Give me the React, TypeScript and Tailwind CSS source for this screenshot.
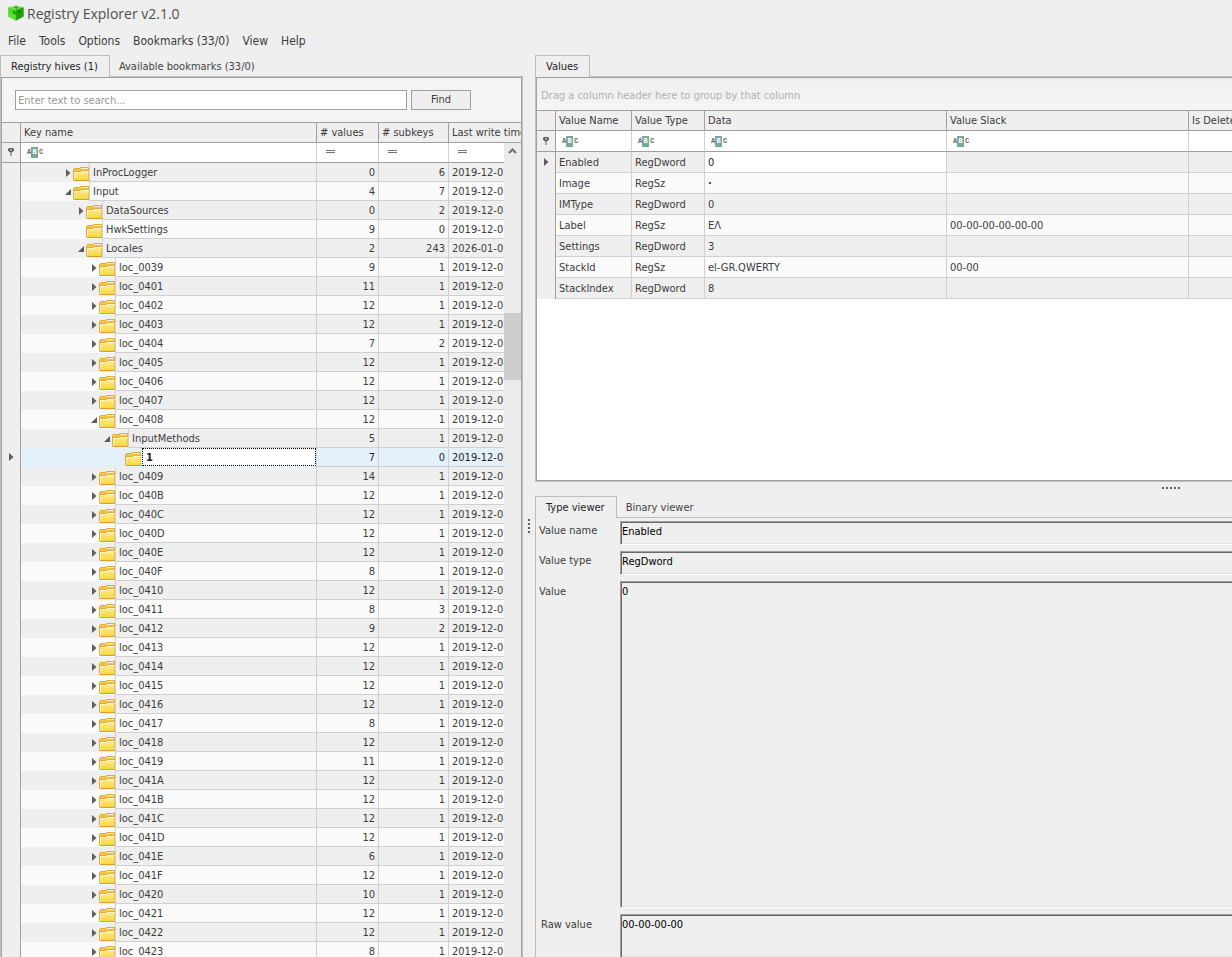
import { useState } from "react";
import type { ReactNode } from "react";

// Define types
type TreeRow = {
  name: string;
  depth: number;
  state: "open" | "closed" | "leaf";
  values: number;
  subkeys: number;
  lastWrite: string;
};

type RegValue = {
  name: string;
  type: string;
  data: string;
  slack: string;
};

const DATE = "2019-12-07 09:17:27";

const row = (
  name: string,
  depth: number,
  state: TreeRow["state"],
  values: number,
  subkeys: number,
  lastWrite = DATE
): TreeRow => ({ name, depth, state, values, subkeys, lastWrite });

const locale = (code: string, values: number, subkeys = 1) =>
  row(`loc_${code}`, 2, "closed", values, subkeys);

const treeRows: TreeRow[] = [
  row("InProcLogger", 0, "closed", 0, 6),
  row("Input", 0, "open", 4, 7),
  row("DataSources", 1, "closed", 0, 2),
  row("HwkSettings", 1, "leaf", 9, 0),
  row("Locales", 1, "open", 2, 243, "2026-01-02 09:17:27"),
  locale("0039", 9),
  locale("0401", 11),
  locale("0402", 12),
  locale("0403", 12),
  locale("0404", 7, 2),
  locale("0405", 12),
  locale("0406", 12),
  locale("0407", 12),
  row("loc_0408", 2, "open", 12, 1),
  row("InputMethods", 3, "open", 5, 1),
  row("1", 4, "leaf", 7, 0),
  locale("0409", 14),
  locale("040B", 12),
  locale("040C", 12),
  locale("040D", 12),
  locale("040E", 12),
  locale("040F", 8),
  locale("0410", 12),
  locale("0411", 8, 3),
  locale("0412", 9, 2),
  locale("0413", 12),
  locale("0414", 12),
  locale("0415", 12),
  locale("0416", 12),
  locale("0417", 8),
  locale("0418", 12),
  locale("0419", 11),
  locale("041A", 12),
  locale("041B", 12),
  locale("041C", 12),
  locale("041D", 12),
  locale("041E", 6),
  locale("041F", 12),
  locale("0420", 10),
  locale("0421", 12),
  locale("0422", 12),
  locale("0423", 8),
];

const regValues: RegValue[] = [
  { name: "Enabled", type: "RegDword", data: "0", slack: "" },
  { name: "Image", type: "RegSz", data: "·", slack: "" },
  { name: "IMType", type: "RegDword", data: "0", slack: "" },
  { name: "Label", type: "RegSz", data: "ΕΛ", slack: "00-00-00-00-00-00" },
  { name: "Settings", type: "RegDword", data: "3", slack: "" },
  { name: "StackId", type: "RegSz", data: "el-GR.QWERTY", slack: "00-00" },
  { name: "StackIndex", type: "RegDword", data: "8", slack: "" },
];

const menuItems = ["File", "Tools", "Options", "Bookmarks (33/0)", "View", "Help"];

const AppIcon = () => (
  <svg width="16" height="16" viewBox="0 0 16 16" aria-hidden="true">
    <path d="M0.5 2.5 8 0.5l7.5 2v9L8 15.5l-7.5-4z" fill="#35b81a" />
    <path d="M0.5 2.5 8 0.5l7.5 2L8 5z" fill="#7fe858" />
    <path d="M0.5 2.5 8 5v10.500l-7.500-4z" fill="#4ade22" />
    <path d="M8 5l7.5-2.500v9L8 15.500z" fill="#23a010" />
    <path d="M5.5 2.5 8 1.500l2.500 1-2 1.500z" fill="#2b9a1c" />
    <path d="M5 5.5l2.500 1v3L5.500 8.500zM10 6l2.500-1v2.500L10 8.500z" fill="#1a7f0c" />
    <path d="M1 8l6 3v3.500l-6-3z" fill="#5fee35" opacity="0.6" />
  </svg>
);

const FolderIcon = () => (
  <svg width="16" height="14" viewBox="0 0 16 14" className="shrink-0" aria-hidden="true">
    <defs>
      <linearGradient id="folderFront" x1="0" y1="0" x2="0" y2="1">
        <stop offset="0" stopColor="#fff0a0" />
        <stop offset="0.5" stopColor="#fbe06a" />
        <stop offset="1" stopColor="#f3dc3c" />
      </linearGradient>
    </defs>
    <path d="M0.5 2.5 1.5 1.5h5l1-1h8v12.500h-15z" fill="#f3c548" stroke="#e0a83a" />
    <path d="M8 1.5h7" stroke="#fff2c0" />
    <path d="M1 4.5h6l1.5-1h7v9.500h-14.500z" fill="url(#folderFront)" />
    <path d="M1 4.5h6l1.5-1h7" stroke="#e3ab3c" fill="none" />
    <path d="M1.5 5.5h6l1-1h7" stroke="#fff6cc" fill="none" />
    <path d="M1.5 5.5v7" stroke="#fdf3b8" />
    <path d="M1 13.5h15" stroke="#dc9a30" />
  </svg>
);

const ClosedArrow = () => (
  <svg width="5" height="8" viewBox="0 0 5 8" aria-hidden="true">
    <path d="M0 0v8L4.5 4z" fill="#5f5f5f" />
  </svg>
);

const OpenArrow = () => (
  <svg width="6" height="6" viewBox="0 0 6 6" aria-hidden="true">
    <path d="M6 0v6H0z" fill="#5a5a5a" />
  </svg>
);

const RowMarker = () => (
  <span className="flex justify-center pb-px pl-px">
    <ClosedArrow />
  </span>
);

const PinIcon = () => (
  <svg width="6" height="8" viewBox="0 0 6 8" className="mx-auto mb-px" aria-hidden="true">
    <path d="M1 0h4l1 1v1.500L4 4.500H2L0 2.500V1z" fill="#5f5f5f" />
    <path d="M2 1h2v1.500H2z" fill="#b5b5b5" />
    <path d="M2.5 4.5h1V8h-1z" fill="#5f5f5f" />
  </svg>
);

const EqualsIcon = () => (
  <svg width="9" height="4" viewBox="0 0 9 4" className="mb-px ml-[9px]" aria-hidden="true">
    <path d="M0 0.5h9M0 2.5h9" stroke="#757575" />
  </svg>
);

const ContainsIcon = () => (
  <span className="flex h-[11px] w-4 items-center font-['Liberation_Mono',monospace] text-[7px] font-bold leading-[11px] text-[#666]">
    <span className="w-1">A</span>
    <span className="mr-px w-[7px] bg-[#76a797] text-center text-white">B</span>
    <span className="w-1">C</span>
  </span>
);

const Tab = ({
  active,
  onClick,
  children,
}: {
  active: boolean;
  onClick?: () => void;
  children: ReactNode;
}) => (
  <button
    type="button"
    role="tab"
    aria-selected={active}
    onClick={onClick}
    className={
      active
        ? "relative -mb-px h-[22px] border border-b-0 border-[#bcbcbc] bg-[#efefef] pt-px pr-[11px] pl-[10px] text-[#1e1e1e]"
        : "h-[21px] px-[9px] pt-[3px] text-[#444]"
    }
  >
    {children}
  </button>
);

const headCell =
  "h-5 border-r border-b border-[#a0a0a0] bg-[#efefef] px-[3px] pt-px text-left leading-4 font-normal whitespace-nowrap";
const lastHeadCell =
  "h-5 overflow-hidden border-b border-[#a0a0a0] bg-[#efefef] px-[3px] pt-px text-left leading-4 font-normal whitespace-nowrap";
const filterCell = "border-r border-b border-r-[#d0d0d0] border-b-[#a0a0a0] bg-white";
const markCell = "border-r border-[#a0a0a0] bg-[#efefef] p-0";
const sunken =
  "block w-full resize-none border border-r-0 border-t-[#a0a0a0] border-b-white border-l-[#a0a0a0] bg-[#efefef] px-px pt-[2px] text-[11px] leading-4 text-black shadow-[inset_1px_1px_0_#696969,inset_0_-1px_0_#e3e3e3] outline-none";

const KeyTree = () => {
  const [selected, setSelected] = useState("1");

  return (
    <div className="relative min-h-0 flex-1 overflow-hidden border-t border-[#a0a0a0] bg-[#efefef]">
      <table className="w-full table-fixed border-separate border-spacing-0">
        <colgroup>
          <col className="w-[19px]" />
          <col />
          <col className="w-[62px]" />
          <col className="w-[70px]" />
          <col className="w-[72px]" />
        </colgroup>
        <thead>
          <tr>
            <th className={headCell} aria-label="Row" />
            <th className={headCell}>Key name</th>
            <th className={headCell}># values</th>
            <th className={headCell}># subkeys</th>
            <th className={lastHeadCell}>Last write timestamp</th>
          </tr>
          <tr className="h-5">
            <td className={`${markCell} border-b`}>
              <PinIcon />
            </td>
            <td className={`${filterCell} pl-[6px]`}>
              <ContainsIcon />
            </td>
            <td className={filterCell}>
              <EqualsIcon />
            </td>
            <td className={filterCell}>
              <EqualsIcon />
            </td>
            <td className="border-b border-[#a0a0a0] bg-white">
              <EqualsIcon />
            </td>
          </tr>
        </thead>
        <tbody>
          {treeRows.map((item) => {
            const active = item.name === selected;
            const cell = "border-b border-[#d0d0d0] px-[3px] pt-[2px] leading-4";
            return (
              <tr
                key={item.name}
                onClick={() => setSelected(item.name)}
                className={
                  active
                    ? "h-[19px] bg-[#e4f1fa] text-[#1e1e1e]"
                    : "h-[19px] odd:bg-[#efefef] even:bg-[#fafafa]"
                }
              >
                <td className={markCell}>{active && <RowMarker />}</td>
                <td className="border-r border-[#d0d0d0] p-0">
                  <div
                    className="flex h-[19px] items-stretch"
                    style={{ paddingLeft: 42 + item.depth * 13 }}
                  >
                    <span className="flex w-[10px] shrink-0 items-center justify-center">
                      {item.state !== "leaf" && (
                        <button type="button" aria-label={`Toggle ${item.name}`}>
                          {item.state === "open" ? <OpenArrow /> : <ClosedArrow />}
                        </button>
                      )}
                    </span>
                    <span className="flex items-end pb-px">
                      <FolderIcon />
                    </span>
                    {active ? (
                      <span className="mb-px ml-px flex-1 border border-dotted border-black bg-white pt-px pl-[3px] leading-4 font-bold">
                        {item.name}
                      </span>
                    ) : (
                      <span className="flex-1 border-b border-l border-[#d0d0d0] pt-[2px] pl-[3px] leading-4">
                        {item.name}
                      </span>
                    )}
                  </div>
                </td>
                <td className={`${cell} border-r text-right`}>{item.values}</td>
                <td className={`${cell} border-r text-right`}>{item.subkeys}</td>
                <td className={`${cell} overflow-hidden whitespace-nowrap`}>
                  {item.lastWrite}
                </td>
              </tr>
            );
          })}
        </tbody>
      </table>

      {/* Scrollbar lies over the rows */}
      <div className="absolute top-5 right-0 bottom-0 w-[17px] bg-[#ebebeb]">
        <svg width="17" height="17" viewBox="0 0 17 17" fill="none" aria-hidden="true">
          <path d="M5 10 8.5 6.5l3.5 3.5" stroke="#707070" strokeWidth="2" />
        </svg>
        <div className="mt-[153px] h-[67px] bg-[#cdcdcd]" />
      </div>
    </div>
  );
};

const ValuesGrid = () => (
  <table className="w-full table-fixed border-separate border-spacing-0 border-t border-[#a0a0a0]">
    <colgroup>
      <col className="w-[19px]" />
      <col className="w-[76px]" />
      <col className="w-[73px]" />
      <col className="w-[242px]" />
      <col className="w-[242px]" />
      <col />
    </colgroup>
    <thead>
      <tr>
        <th className={headCell} aria-label="Row" />
        <th className={headCell}>Value Name</th>
        <th className={headCell}>Value Type</th>
        <th className={headCell}>Data</th>
        <th className={headCell}>Value Slack</th>
        <th className={lastHeadCell}>Is Deleted</th>
      </tr>
      <tr className="h-[21px]">
        <td className={`${markCell} border-b`}>
          <PinIcon />
        </td>
        {[0, 1, 2, 3].map((i) => (
          <td key={i} className={`${filterCell} pl-[6px]`}>
            <ContainsIcon />
          </td>
        ))}
        <td className="border-b border-[#a0a0a0] bg-white" />
      </tr>
    </thead>
    <tbody>
      {regValues.map((value, i) => {
        const cell = "border-r border-b border-[#d0d0d0] px-[3px] pt-[2px]";
        return (
          <tr key={value.name} className="h-[21px] odd:bg-[#efefef] even:bg-[#fafafa]">
            <td className={markCell}>{i === 0 && <RowMarker />}</td>
            <td className={cell}>{value.name}</td>
            <td className={cell}>{value.type}</td>
            <td className={i === 0 ? `${cell} bg-white text-[#1e1e1e]` : cell}>
              {value.data === "·" ? <b>·</b> : value.data}
            </td>
            <td className={cell}>{value.slack}</td>
            <td className="border-b border-[#d0d0d0]" />
          </tr>
        );
      })}
    </tbody>
  </table>
);

const TypeViewer = () => (
  <div className="grid min-h-0 flex-1 grid-cols-[81px_minmax(0,1fr)] grid-rows-[24px_24px_minmax(0,1fr)_43px] gap-y-[6px] border-t border-l border-[#bcbcbc] pt-[3px] pl-[3px] leading-4">
    <label htmlFor="valueName" className="pt-[2px]">
      Value name
    </label>
    <input id="valueName" readOnly value="Enabled" className={`${sunken} pb-1`} />
    <label htmlFor="valueType" className="pt-[2px]">
      Value type
    </label>
    <input id="valueType" readOnly value="RegDword" className={`${sunken} pb-1`} />
    <label htmlFor="value" className="pt-[3px]">
      Value
    </label>
    <textarea id="value" readOnly value="0" className={sunken} />
    <label htmlFor="rawValue" className="pt-[3px] pl-[2px]">
      Raw value
    </label>
    <textarea id="rawValue" readOnly value="00-00-00-00" className={`${sunken} border-b-0`} />
  </div>
);

const App = () => {
  const [leftTab, setLeftTab] = useState("hives");
  const [viewer, setViewer] = useState("type");

  return (
    <div className="flex h-screen flex-col overflow-hidden bg-[#efefef] font-['DejaVu_Sans_Condensed','DejaVu_Sans',sans-serif] text-[11px] text-[#3c3c3c]">
      <header>
        <h1 className="flex h-[26px] items-center gap-[3px] pl-2 font-['Open_Sans',sans-serif] text-[14px] text-[#505050]">
          <AppIcon />
          Registry Explorer v2.1.0
        </h1>
        <nav className="flex h-[29px] items-center gap-[13px] pl-2 text-[12px]">
          {menuItems.map((item) => (
            <button key={item} type="button">
              {item}
            </button>
          ))}
        </nav>
      </header>

      <div className="flex min-h-0 flex-1">
        {/* Keys */}
        <section className="flex w-[523px] shrink-0 flex-col">
          <div className="flex h-[21px]" role="tablist">
            <Tab active={leftTab === "hives"} onClick={() => setLeftTab("hives")}>
              Registry hives (1)
            </Tab>
            <Tab active={leftTab === "bookmarks"} onClick={() => setLeftTab("bookmarks")}>
              Available bookmarks (33/0)
            </Tab>
          </div>
          <div className="flex min-h-0 flex-1 flex-col border border-b-0 border-[#c0c0c0]">
            <div className="flex min-h-0 flex-1 flex-col border border-b-0 border-[#a0a0a0] bg-[#f5f5f5]">
              <div className="flex gap-1 py-3 pl-[13px]">
                <input
                  type="text"
                  aria-label="Search keys"
                  placeholder="Enter text to search..."
                  className="h-5 w-[392px] border border-[#a0a0a0] bg-white px-[2px] outline-none placeholder:text-[#969696]"
                />
                <button type="button" className="h-5 w-[60px] border border-[#a0a0a0] bg-[#efefef]">
                  Find
                </button>
              </div>
              <KeyTree />
            </div>
          </div>
        </section>

        {/* Splitter */}
        <div className="flex w-3 shrink-0 flex-col items-center justify-center gap-[2px] pt-10">
          {[0, 1, 2, 3].map((i) => (
            <span key={i} className="size-[2px] bg-[#606060]" />
          ))}
        </div>

        {/* Values and viewers */}
        <section className="flex min-w-0 flex-1 flex-col">
          <div className="flex h-[21px]" role="tablist">
            <Tab active>Values</Tab>
          </div>
          <div className="h-[406px] shrink-0 border border-r-0 border-[#c0c0c0]">
            <div className="h-full overflow-hidden border border-r-0 border-[#a0a0a0] bg-white">
              <div className="flex h-8 items-center bg-linear-to-b from-[#efefef] to-[#f5f5f5] pt-[4px] pl-1 text-[#b0b0b0]">
                Drag a column header here to group by that column
              </div>
              <ValuesGrid />
            </div>
          </div>
          <div className="flex h-[14px] shrink-0 items-center justify-end gap-[2px] pr-[52px] pb-[2px]">
            {[0, 1, 2, 3, 4].map((i) => (
              <span key={i} className="size-[2px] bg-[#606060]" />
            ))}
          </div>
          <div className="flex h-[21px] shrink-0" role="tablist">
            <Tab active={viewer === "type"} onClick={() => setViewer("type")}>
              Type viewer
            </Tab>
            <Tab active={viewer === "binary"} onClick={() => setViewer("binary")}>
              Binary viewer
            </Tab>
          </div>
          <TypeViewer />
        </section>
      </div>
    </div>
  );
};

export default App;
